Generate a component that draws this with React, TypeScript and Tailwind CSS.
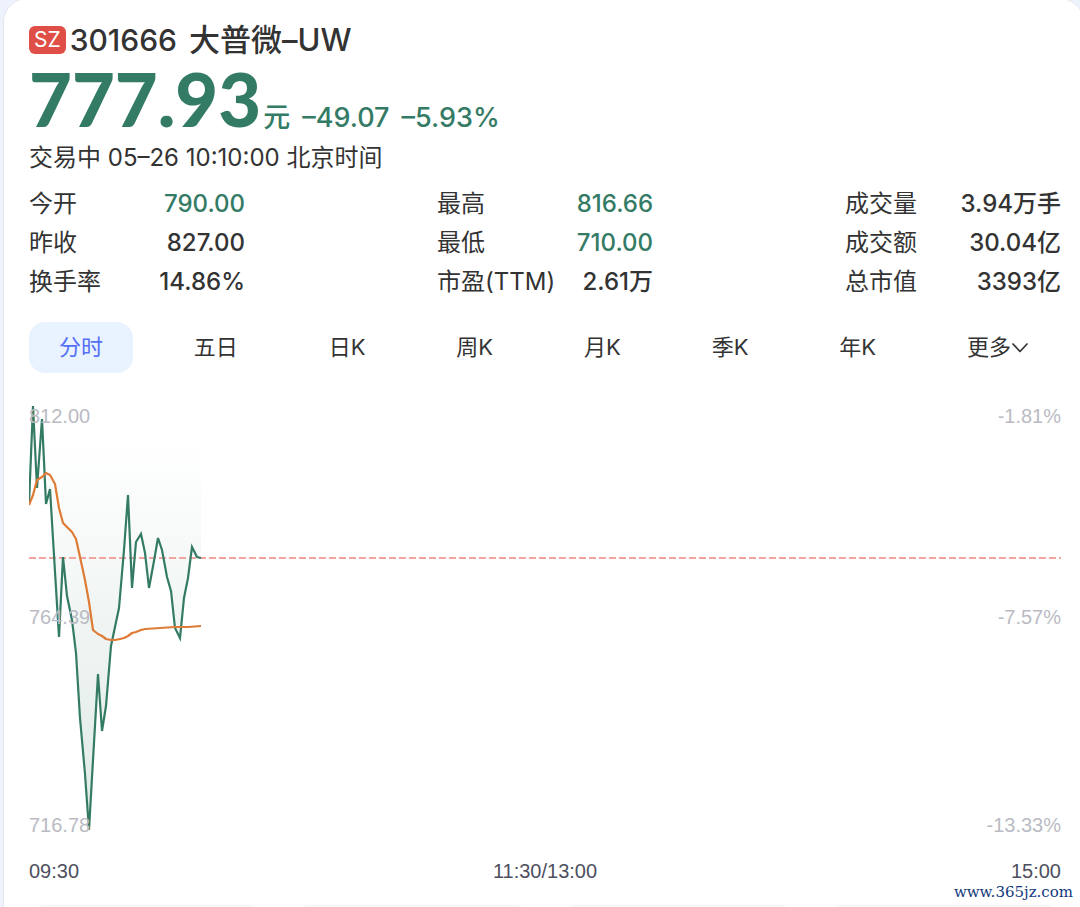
type Stat = { label: string; value: string; down?: boolean };

const columns: Stat[][] = [
  [
    { label: "今开", value: "790.00", down: true },
    { label: "昨收", value: "827.00" },
    { label: "换手率", value: "14.86%" },
  ],
  [
    { label: "最高", value: "816.66", down: true },
    { label: "最低", value: "710.00", down: true },
    { label: "市盈(TTM)", value: "2.61万" },
  ],
  [
    { label: "成交量", value: "3.94万手" },
    { label: "成交额", value: "30.04亿" },
    { label: "总市值", value: "3393亿" },
  ],
];

const tabs = ["分时", "五日", "日K", "周K", "月K", "季K", "年K"];

const priceLine =
  "0,104 4,6 8,88 13,19 17,104 21,89 26,172 30,237 34,157 38,196 43,220 47,253 51,318 56,374 60,430 64,360 69,274 73,331 77,306 82,246 86,227 90,208 95,150 99,95 103,188 107,142 112,134 116,153 120,188 125,161 129,138 133,150 138,177 142,191 146,228 151,238 155,198 159,178 163,147 168,157 172,158";

const averageLine =
  "0,105 4,95 8,80 13,77 17,73 21,75 26,84 30,108 34,123 38,127 43,132 47,139 51,157 56,180 60,202 64,230 69,234 73,236 77,239 82,240 86,240 91,239 95,238 99,236 103,233 107,232 112,230 116,229 131,228 146,227 159,227 172,226";

function Chart() {
  return (
    <section aria-label="分时走势" className="font-['Liberation_Sans',Arial,sans-serif] text-xl leading-6">
      <div className="grid">
        <svg
          viewBox="0 0 1032 440"
          preserveAspectRatio="none"
          className="col-start-1 row-start-1 h-[440px] w-full"
          fill="none"
          aria-hidden="true"
        >
          <defs>
            <linearGradient id="area" gradientUnits="userSpaceOnUse" x1="0" y1="40" x2="0" y2="430">
              <stop offset="0" stopColor="#347b66" stopOpacity="0" />
              <stop offset="1" stopColor="#347b66" stopOpacity="0.16" />
            </linearGradient>
          </defs>
          <polygon points={`0,6 ${priceLine} 172,6`} fill="url(#area)" />
          <line x1="0" y1="158" x2="1032" y2="158" stroke="#f0a5a1" strokeWidth="2" strokeDasharray="7 3" />
          <polyline points={priceLine} stroke="#347b66" strokeWidth="2.2" />
          <polyline points={averageLine} stroke="#de7b34" strokeWidth="2.2" strokeLinejoin="round" />
        </svg>
        <div className="col-start-1 row-start-1 flex justify-between pt-1 pb-[3px] text-[#babbc4]">
          <div className="flex flex-col justify-between">
            <span>812.00</span>
            <span className="mb-2">764.39</span>
            <span>716.78</span>
          </div>
          <div className="flex flex-col justify-between text-right">
            <span>-1.81%</span>
            <span className="mb-2">-7.57%</span>
            <span>-13.33%</span>
          </div>
        </div>
      </div>
      <div className="mt-[19px] flex justify-between text-[#4d4f5e]">
        <span>09:30</span>
        <span>11:30/13:00</span>
        <span>15:00</span>
      </div>
    </section>
  );
}

export default function App() {
  return (
    <div className="relative h-screen overflow-hidden bg-[#eef2fc] font-[Inter,'Noto_Sans_CJK_SC',sans-serif] text-[#333]">
      <main className="-mt-0.5 -mr-1 ml-[3px] min-h-full rounded-t-3xl border border-[#e4e6ee] bg-white pt-6 pr-[22px] pl-[25px]">
        <h1 className="flex items-center text-[30px] leading-[34px] font-medium">
          <span className="mr-1 rounded-md bg-[#e04f47] px-[5px] text-[21px] leading-7 font-normal text-white">
            SZ
          </span>
          <span>301666</span>
          <span className="ml-3 text-[31px]">大普微–UW</span>
        </h1>
        <div className="flex items-baseline text-[27px] font-medium text-[#347b66]">
          <strong className="font-[Lato,sans-serif] text-[74px] leading-[84px] font-black">777.93</strong>
          <span className="ml-0.5">元</span>
          <span className="ml-3">–49.07</span>
          <span className="ml-3">–5.93%</span>
        </div>
        <p className="mt-[3px] text-[24px] leading-7">交易中 05–26 10:10:00 北京时间</p>

        <div className="mt-3 flex justify-between text-[24px] leading-[39px]">
          {columns.map((rows) => (
            <dl key={rows[0].label} className="w-[216px]">
              {rows.map((row) => (
                <div key={row.label} className="flex justify-between whitespace-nowrap">
                  <dt>{row.label}</dt>
                  <dd className={row.down ? "font-medium text-[#347b66]" : "font-medium"}>{row.value}</dd>
                </div>
              ))}
            </dl>
          ))}
        </div>

        <nav className="mt-[21px] mb-[27px] flex justify-between text-[22px] leading-[51px]">
          {tabs.map((tab, i) => (
            <button
              key={tab}
              type="button"
              className={i === 0 ? "rounded-2xl bg-[#e9f2ff] px-[30px] text-[#5470f6]" : "px-[30px]"}
            >
              {tab}
            </button>
          ))}
          <button type="button" className="flex items-center px-[30px]">
            更多
            <svg viewBox="0 0 20 12" className="h-3 w-5" fill="none" stroke="currentColor" aria-hidden="true">
              <path d="M2 2l7 7.5L16 2" strokeWidth="1.7" strokeLinecap="round" strokeLinejoin="round" />
            </svg>
          </button>
        </nav>

        <Chart />

        <div className="mt-[22px] grid grid-cols-4 gap-[29px]">
          <div className="h-12 rounded-2xl bg-[#f7f7f8]" />
          <div className="h-12 rounded-2xl bg-[#f7f7f8]" />
          <div className="h-12 rounded-2xl bg-[#f7f7f8]" />
          <div className="h-12 rounded-2xl bg-[#f7f7f8]" />
        </div>
      </main>
      <a
        href="#"
        className="absolute right-[7px] bottom-[5px] font-['DejaVu_Serif',serif] text-[15px] leading-5 text-[#12397d]"
      >
        www.365jz.com
      </a>
    </div>
  );
}
